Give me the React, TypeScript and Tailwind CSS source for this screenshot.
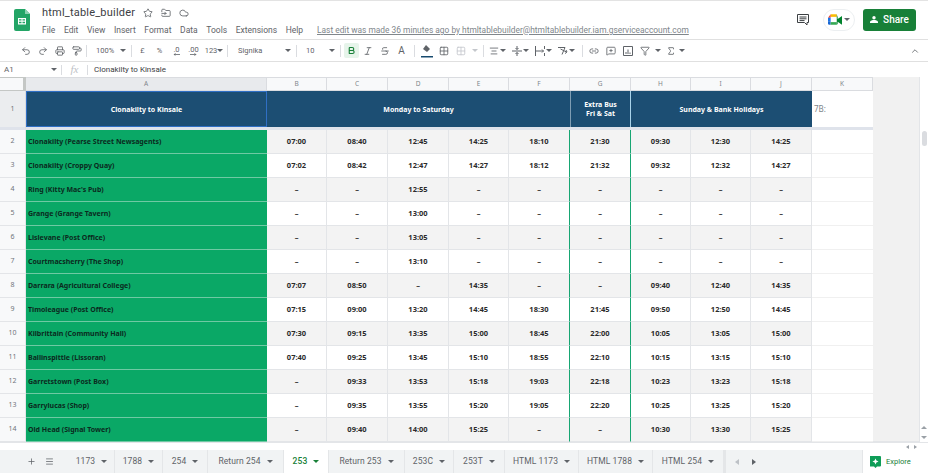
import { AlignCenter, Bold, ChevronUp, Cloud, FolderInput, Grid2x2, Italic, Link2, Menu, MessageSquarePlus, PaintRoller, Plus, Printer, Redo2, Sigma, Star, Strikethrough, Undo2, Filter } from "lucide-react";
import type { ReactNode } from "react";

const cols = "grid-cols-[26px_241px_60px_61px_61px_60px_61px_61px_60px_60px_61px_61px]";

const rows: [number, string, string[]][] = [
  [2, "Clonakilty (Pearse Street Newsagents)", ["07:00", "08:40", "12:45", "14:25", "18:10", "21:30", "09:30", "12:30", "14:25"]],
  [3, "Clonakilty (Croppy Quay)", ["07:02", "08:42", "12:47", "14:27", "18:12", "21:32", "09:32", "12:32", "14:27"]],
  [4, "Ring (Kitty Mac's Pub)", ["–", "–", "12:55", "–", "–", "–", "–", "–", "–"]],
  [5, "Grange (Grange Tavern)", ["–", "–", "13:00", "–", "–", "–", "–", "–", "–"]],
  [6, "Lislevane (Post Office)", ["–", "–", "13:05", "–", "–", "–", "–", "–", "–"]],
  [7, "Courtmacsherry (The Shop)", ["–", "–", "13:10", "–", "–", "–", "–", "–", "–"]],
  [8, "Darrara (Agricultural College)", ["07:07", "08:50", "–", "14:35", "–", "–", "09:40", "12:40", "14:35"]],
  [9, "Timoleague (Post Office)", ["07:15", "09:00", "13:20", "14:45", "18:30", "21:45", "09:50", "12:50", "14:45"]],
  [10, "Kilbrittain (Community Hall)", ["07:30", "09:15", "13:35", "15:00", "18:45", "22:00", "10:05", "13:05", "15:00"]],
  [11, "Ballinspittle (Lissoran)", ["07:40", "09:25", "13:45", "15:10", "18:55", "22:10", "10:15", "13:15", "15:10"]],
  [12, "Garretstown (Post Box)", ["–", "09:33", "13:53", "15:18", "19:03", "22:18", "10:23", "13:23", "15:18"]],
  [13, "Garrylucas (Shop)", ["–", "09:35", "13:55", "15:20", "19:05", "22:20", "10:25", "13:25", "15:20"]],
  [14, "Old Head (Signal Tower)", ["–", "09:40", "14:00", "15:25", "–", "–", "10:30", "13:30", "15:25"]],
];

const menus = ["File", "Edit", "View", "Insert", "Format", "Data", "Tools", "Extensions", "Help"];
const letters = ["A", "B", "C", "D", "E", "F", "G", "H", "I", "J", "K"];
const tabs = [
  { name: "1173", width: "w-[46px]" },
  { name: "1788", width: "w-[48px]" },
  { name: "254", width: "w-[45px]" },
  { name: "Return 254", width: "w-[76px]" },
  { name: "253", width: "w-[45px]" },
  { name: "Return 253", width: "w-[76px]" },
  { name: "253C", width: "w-[49px]" },
  { name: "253T", width: "w-[51px]" },
  { name: "HTML 1173", width: "w-[74px]" },
  { name: "HTML 1788", width: "w-[74px]" },
  { name: "HTML 254", width: "w-[71px]" },
];

function Caret({ className = "" }: { className?: string }) {
  return <span className={`inline-block h-0 w-0 shrink-0 border-x-[3px] border-t-[3px] border-x-transparent border-t-[#5f6368] ${className}`} />;
}

function SheetsLogo() {
  return (
    <svg width="16" height="22" viewBox="0 0 16 22">
      <path d="M2 0h9l5 5v15.500a1.500 1.500 0 0 1-1.500 1.500h-12.500a2 2 0 0 1-2-2v-18a2 2 0 0 1 2-2z" fill="#23a566" />
      <path d="M11 0l5 5h-5z" fill="#8ed1b1" />
      <path d="M4 9h8v6.500h-8z M5 10.200v1.300h2.500v-1.300z M8.500 10.200v1.300h2.500v-1.300z M5 12.700v1.600h2.500v-1.600z M8.500 12.700v1.600h2.500v-1.600z" fill="#fff" fillRule="evenodd" />
    </svg>
  );
}

function MeetLogo() {
  return (
    <svg width="14" height="11" viewBox="0 0 16 12">
      <path d="M3 0h7v3h-7z" fill="#fbbc04" />
      <path d="M3 0v4h-3z" fill="#ea4335" />
      <path d="M0 4h3v4h-3z" fill="#1a73e8" />
      <path d="M0 8h3v4h-1.500a1.500 1.500 0 0 1-1.500-1.500z" fill="#1967d2" />
      <path d="M3 9h7v3h-7z" fill="#34a853" />
      <path d="M10 0v12l1-1v-2.500l5 3.500v-10l-5 3.500v-2.500z" fill="#00832d" />
    </svg>
  );
}

function TitleBar() {
  return (
    <div className="flex h-[39px] shrink-0 border-t border-[#e3e3e3]">
      <div className="flex w-[42px] shrink-0 justify-center pl-[1px] pt-[8px]">
        <SheetsLogo />
      </div>
      <div className="min-w-0 flex-1">
        <div className="flex h-[23px] items-center">
          <span className="w-[100px] whitespace-nowrap text-[11px] leading-none tracking-[0.2px] text-[#3c4043]">html_table_builder</span>
          <div className="ml-[1px] flex items-center gap-[8px] text-[#5f6368]">
            <Star size={10} />
            <FolderInput size={10} />
            <Cloud size={10} />
          </div>
        </div>
        <div className="flex h-[12px] items-center text-[8.500px] leading-none text-[#5f6368]">
          <div className="flex w-[275px] gap-[8.600px]">
            {menus.map((m) => (
              <span key={m}>{m}</span>
            ))}
          </div>
          <span className="whitespace-nowrap text-[8.400px] text-[#80868b] underline">
            Last edit was made 36 minutes ago by htmltablebuilder@htmltablebuilder.iam.gserviceaccount.com
          </span>
        </div>
      </div>
      <div className="flex shrink-0 items-center pb-[1px] pr-[12px]">
        <svg width="12" height="12" viewBox="0 0 12 12" fill="none" stroke="#3c4043" strokeWidth="1">
          <path d="M.5.500h11v8h-1.500v2.500l-2.500-2.500h-7z M2.500 3h7 M2.500 4.800h7 M2.500 6.600h5" />
        </svg>
        <div className="ml-[14px] flex h-[22px] w-[32px] items-center justify-center gap-[2px] rounded-full border border-[#eceff1]">
          <MeetLogo />
          <Caret className="border-t-[#1a73e8]" />
        </div>
        <button className="ml-[8px] flex h-[22px] w-[53px] items-center justify-center gap-[4px] rounded-[3px] bg-[#188038] text-[10px] font-medium text-white">
          <svg width="9" height="7" viewBox="0 0 9 7" fill="#fff">
            <circle cx="4" cy="1.700" r="1.700" />
            <path d="M0 7v-1c0-1.300 2.600-1.900 4-1.900s4 .6 4 1.900v1z" />
          </svg>
          Share
        </button>
      </div>
    </div>
  );
}

function Sep() {
  return <span className="h-[12px] w-px shrink-0 bg-[#dadce0]" />;
}

function Cell({ children, className = "w-[17px]" }: { children: ReactNode; className?: string }) {
  return <span className={`flex shrink-0 items-center justify-center ${className}`}>{children}</span>;
}

function Decimal({ label, dir }: { label: string; dir: "l" | "r" }) {
  return (
    <span className="flex flex-col items-center leading-[7px]">
      {label}
      <svg width="8" height="3" viewBox="0 0 8 3" fill="none" stroke="#5f6368" strokeWidth=".8">
        <path d={dir === "l" ? "M1 1.500h6 M2.500 .2l-1.300 1.300 1.300 1.300" : "M1 1.500h6 M5.500 .2l1.300 1.300-1.300 1.300"} />
      </svg>
    </span>
  );
}

function Toolbar() {
  const ic = 10;
  const line = { fill: "none", stroke: "#5f6368", strokeWidth: 1 };
  return (
    <div className="flex h-[23px] shrink-0 items-center border-y border-[#e0e0e0] pl-[17px] text-[7.500px] text-[#5f6368]">
      <Cell><Undo2 size={ic} /></Cell>
      <Cell><Redo2 size={ic} /></Cell>
      <Cell><Printer size={ic} /></Cell>
      <Cell><PaintRoller size={ic} /></Cell>
      <span className="w-px" />
      <Sep />
      <span className="flex w-[44px] items-center justify-between pl-[9px] pr-[5px]">100%<Caret /></span>
      <Sep />
      <span className="w-[2px]" />
      <Cell>£</Cell>
      <Cell>%</Cell>
      <Cell><Decimal label=".0" dir="l" /></Cell>
      <Cell><Decimal label=".00" dir="r" /></Cell>
      <Cell className="w-[24px]">123<Caret /></Cell>
      <span className="w-[1px]" />
      <Sep />
      <span className="flex w-[68px] items-center justify-between pl-[10px] pr-[5px]">Signika<Caret /></span>
      <Sep />
      <span className="flex w-[43px] items-center justify-between pl-[9px] pr-[5px]">10<Caret /></span>
      <Sep />
      <span className="ml-[3px] flex h-[15px] w-[15px] items-center justify-center rounded-[2px] bg-[#e6f4ea] text-[#188038]">
        <Bold size={9} strokeWidth={3} />
      </span>
      <Cell><Italic size={ic} /></Cell>
      <Cell><Strikethrough size={ic} /></Cell>
      <Cell><span className="text-[10px] leading-none">A</span></Cell>
      <span className="w-[4px]" />
      <Sep />
      <span className="w-[3px]" />
      <Cell>
        <svg width="12" height="14" viewBox="0 0 12 14">
          <path d="M5 1l4 4-3 3-4-3z" fill="#5f6368" />
          <path d="M0 12h12v1.500h-12z" fill="#174a6e" />
        </svg>
      </Cell>
      <Cell><Grid2x2 size={ic} /></Cell>
      <Cell><Grid2x2 size={ic} className="text-[#c4c7cc]" /></Cell>
      <Cell className="w-[12px]"><Caret className="border-t-[#c4c7cc]" /></Cell>
      <span className="w-[2px]" />
      <Sep />
      <span className="w-[2px]" />
      <Cell className="w-[23px] gap-[1px]"><AlignCenter size={ic} /><Caret /></Cell>
      <Cell className="w-[23px] gap-[1px]">
        <svg width="10" height="10" viewBox="0 0 10 10" {...line}>
          <path d="M0 5h10 M5 0v3.500 M3.500 2l1.500 1.500 1.500-1.500 M5 10v-3.500 M3.500 8l1.500-1.500 1.500 1.500" />
        </svg>
        <Caret />
      </Cell>
      <Cell className="w-[23px] gap-[1px]">
        <svg width="10" height="10" viewBox="0 0 10 10" {...line}>
          <path d="M.5 0v10 M9.500 0v3 M9.500 7v3 M.5 5h8 M7 3.500l1.500 1.500-1.500 1.500" />
        </svg>
        <Caret />
      </Cell>
      <Cell className="w-[23px] gap-[1px]">
        <svg width="10" height="10" viewBox="0 0 10 10" {...line}>
          <path d="M0 1.500h7l-3 7 M2.500 3l6 3 M7 7.500l2-1.500-1-2" />
        </svg>
        <Caret />
      </Cell>
      <span className="w-[4px]" />
      <Sep />
      <span className="w-[2px]" />
      <Cell><Link2 size={ic} /></Cell>
      <Cell><MessageSquarePlus size={ic} /></Cell>
      <Cell>
        <svg width="10" height="10" viewBox="0 0 10 10" fill="none" stroke="#5f6368" strokeWidth="1">
          <path d="M.5.500h9v9h-9z M3 8v-2 M5 8v-4.500 M7 8v-1.500" />
        </svg>
      </Cell>
      <Cell><Filter size={ic} /></Cell>
      <Cell className="w-[9px]"><Caret /></Cell>
      <Cell><Sigma size={ic} /></Cell>
      <Caret />
      <ChevronUp size={10} className="ml-auto mr-[8px]" />
    </div>
  );
}

function FormulaBar() {
  return (
    <div className="flex h-[15px] shrink-0 items-center text-[8px] text-[#5f6368]">
      <span className="w-[51px] pl-[4px]">A1</span>
      <Caret />
      <span className="ml-[4px] h-[10px] w-px bg-[#dadce0]" />
      <span className="w-[25px] text-center font-['Liberation_Serif',serif] text-[11px] italic leading-none text-[#bdc1c6]">fx</span>
      <span className="h-[10px] w-px bg-[#dadce0]" />
      <span className="ml-[6px] text-[#3c4043]">Clonakilty to Kinsale</span>
    </div>
  );
}

function Sheet() {
  const head = "flex h-[36px] items-center justify-center bg-[#1c4e73] text-center text-[7px] font-bold leading-[9px] text-white";
  const band = "h-[39px] border-b-[3px] border-[#dfe3eb]";
  return (
    <div className="flex min-h-0 flex-1 flex-col overflow-hidden">
      <div className="flex min-h-0 flex-1">
        <div className={`grid w-[873px] shrink-0 content-start ${cols} font-['Noto_Sans',sans-serif]`}>
          <div className="h-[14px] border-y border-r-[3px] border-[#c4c7c5] bg-[#f8f9fa]" />
          {letters.map((l, i) => (
            <div
              key={l}
              className={`flex h-[14px] items-center justify-center border-y border-r border-[#dadce0] text-[6.500px] text-[#80868b] ${i === 0 ? "bg-[#e8eaed]" : "bg-[#f8f9fa]"}`}
            >
              {l}
            </div>
          ))}

          <div className="flex h-[39px] items-center justify-center border-b-[3px] border-r border-b-[#dfe3eb] border-r-[#dadce0] bg-[#ebedef] text-[7px] text-[#70757a]">1</div>
          <div className={band}>
            <div className={`${head} border border-[#2f6fc4]`}>Clonakilty to Kinsale</div>
          </div>
          <div className={`col-span-5 ${band}`}>
            <div className={head}>Monday to Saturday</div>
          </div>
          <div className={band}>
            <div className={`${head} border-x border-l-[#7f9db3] border-r-[#a9d3ea]`}>
              Extra Bus
              <br />
              Fri &amp; Sat
            </div>
          </div>
          <div className={`col-span-3 ${band}`}>
            <div className={head}>Sunday &amp; Bank Holidays</div>
          </div>
          <div className={`flex items-center pl-[2px] text-[8px] text-[#80868b] ${band}`}>7B:</div>

          {rows.map(([n, stop, times]) => {
            const bg = n % 2 === 0 ? "bg-[#f3f3f3]" : "bg-white";
            return (
              <div key={n} className="contents">
                <div className="flex h-[24px] items-center justify-center border-b border-r border-[#e3e5e8] bg-[#f8f9fa] text-[7px] text-[#70757a]">{n}</div>
                <div className="flex h-[24px] items-center truncate border-b border-[#6fc9a3] bg-[#0aa866] pl-[2px] pt-[1px] text-[7px] font-bold text-[#0b2a20]">{stop}</div>
                {times.map((t, i) => (
                  <div
                    key={i}
                    className={`flex h-[24px] items-center justify-center border-b border-b-[#e3e5e8] text-[7.500px] font-bold text-[#2b2b2b] ${bg} border-r ${i === 4 || i === 5 ? "border-r-[#17a673]" : "border-r-[#e3e5e8]"}`}
                  >
                    {t}
                  </div>
                ))}
                <div className="h-[24px] border-b border-[#f0f0f0] bg-white" />
              </div>
            );
          })}
        </div>
        <div className="flex-1 border-b border-[#e3e5e8] bg-[#f1f1f1]" />
        <div className="flex w-[9px] shrink-0 flex-col items-center border-l border-[#e3e5e8] bg-white">
          <div className="mt-[54px] h-[15px] w-[5px] rounded-full bg-[#dadce0]" />
          <div className="mt-auto flex h-[20px] flex-col items-center justify-center gap-[7px]">
            <Caret className="rotate-180 border-t-[#9aa0a6]" />
            <Caret className="border-t-[#9aa0a6]" />
          </div>
        </div>
      </div>
      <div className="flex h-[8px] shrink-0 items-center justify-end gap-[5px] border-t border-[#e3e5e8] pr-[11px]">
        <span className="h-0 w-0 border-y-[2px] border-r-[3px] border-y-transparent border-r-[#9aa0a6]" />
        <span className="h-0 w-0 border-y-[2px] border-l-[3px] border-y-transparent border-l-[#9aa0a6]" />
      </div>
    </div>
  );
}

function TabBar() {
  return (
    <div className="flex h-[23px] shrink-0 items-stretch bg-[#f1f3f4] text-[8.500px] text-[#5f6368]">
      <div className="flex w-[69px] items-center gap-[9px] pl-[27px]">
        <Plus size={9} />
        <Menu size={9} />
      </div>
      {tabs.map((t) => {
        const active = t.name === "253";
        return (
          <div
            key={t.name}
            className={`flex items-center justify-center gap-[6px] whitespace-nowrap border-r border-[#e4e6e8] tracking-[0.1px] ${t.width} ${active ? "bg-white font-medium text-[#188038]" : ""}`}
          >
            {t.name}
            <Caret className={active ? "border-t-[#188038]" : ""} />
          </div>
        );
      })}
      <div className="flex w-[54px] items-center gap-[13px] border-l-2 border-[#e4e6e8] pl-[9px]">
        <span className="h-0 w-0 border-y-[3px] border-r-[4px] border-y-transparent border-r-[#bdc1c6]" />
        <span className="h-0 w-0 border-y-[3px] border-l-[4px] border-y-transparent border-l-[#5f6368]" />
      </div>
      <div className="ml-auto flex w-[66px] items-center gap-[5px] border-l border-[#e4e6e8] bg-white pl-[7px] text-[7.500px] text-[#188038]">
        <svg width="11" height="12" viewBox="0 0 11 12">
          <path d="M1 0h9a1 1 0 0 1 1 1v8.500a1 1 0 0 1-1 1h-3l-1.500 1.500-1.500-1.500h-3.500a1 1 0 0 1-1-1v-8.500a1 1 0 0 1 1-1z" fill="#0f9d58" />
          <path d="M5.500 2.500l.9 2.100 2.100.9-2.100.9-.9 2.100-.9-2.100-2.100-.9 2.100-.9z" fill="#fff" />
        </svg>
        Explore
      </div>
    </div>
  );
}

export default function App() {
  return (
    <div className="flex h-[473px] w-[928px] flex-col overflow-hidden bg-white font-['Roboto',sans-serif]">
      <TitleBar />
      <Toolbar />
      <FormulaBar />
      <Sheet />
      <TabBar />
    </div>
  );
}
